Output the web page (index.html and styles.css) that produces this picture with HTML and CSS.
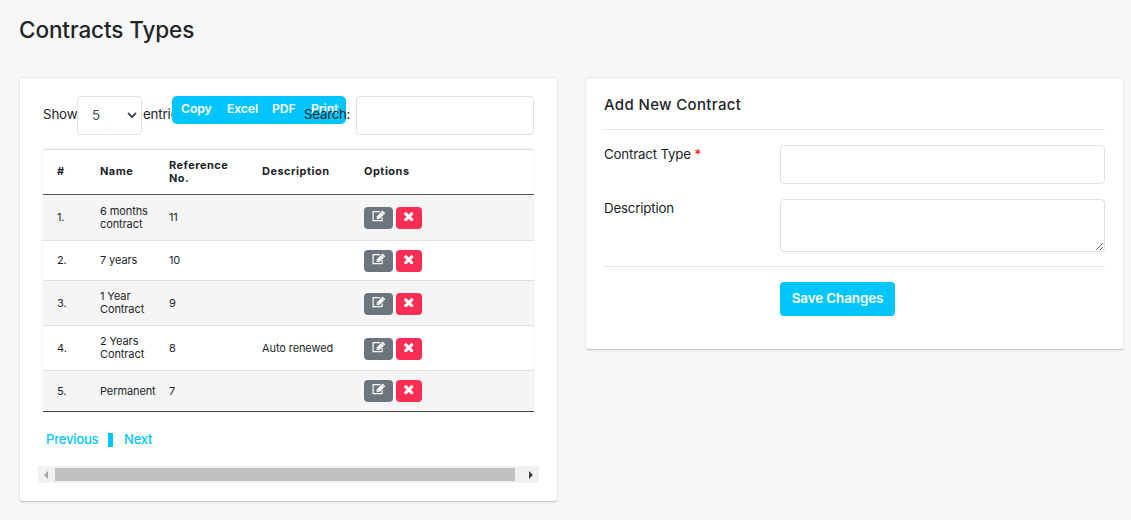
FILE: index.html
```
<!DOCTYPE html>
<html lang="en">
<head>
<meta charset="utf-8">
<title>Contracts Types</title>
<link rel="stylesheet" href="styles.css">
</head>
<body>
<svg class="sprite" width="0" height="0">
  <symbol id="edit" viewBox="0 0 14 12">
    <path d="M8.2 1.6H1.1v9h9V7.2" fill="none" stroke="currentColor" stroke-width="1.2"/>
    <path d="M4.7 9V6.4L10.6.5 13.3 3.2 7.4 9z" fill="currentColor"/>
    <path d="M5.6 6.9l1.3 1.3M9.7 2.1l2 2" stroke="#6c757d" stroke-width=".6"/>
  </symbol>
  <symbol id="times" viewBox="302 366 1188 1188">
    <path fill="currentColor" d="M1490 1322q0 40-28 68l-136 136q-28 28-68 28t-68-28l-294-294-294 294q-28 28-68 28t-68-28l-136-136q-28-28-28-68t28-68l294-294-294-294q-28-28-28-68t28-68l136-136q28-28 68-28t68 28l294 294 294-294q28-28 68-28t68 28l136 136q28 28 28 68t-28 68l-294 294 294 294q28 28 28 68z"/>
  </symbol>
</svg>
<h1 class="title">Contracts Types</h1>
<main class="columns">
  <section class="card list-card">
    <div class="toolbar">
      <label class="length"><span class="show">Show</span>
        <span class="select"><span class="value">5</span><svg width="10" height="7" viewBox="0 0 10 7"><path d="M1 1l4 4 4-4" fill="none" stroke="#495057" stroke-width="2"/></svg></span>
        <span class="entries">entries</span></label>
      <div class="exports"><span class="copy">Copy</span><span class="excel">Excel</span><span class="pdf">PDF</span><span class="print">Print</span></div>
      <label class="search"><span class="search-text">Search:</span><input class="field" type="text"></label>
    </div>
    <table class="table">
      <colgroup><col class="c1"><col class="c2"><col class="c3"><col class="c4"><col class="c5"></colgroup>
      <thead><tr><th>#</th><th>Name</th><th>Reference<br>No.</th><th>Description</th><th>Options</th></tr></thead>
      <tbody>
        <tr class="tall"><td>1.</td><td>6 months<br>contract</td><td>11</td><td></td><td><div class="actions"><span class="btn edit"><svg><use href="#edit"/></svg></span><span class="btn del"><svg><use href="#times"/></svg></span></div></td></tr>
        <tr><td>2.</td><td>7 years</td><td>10</td><td></td><td><div class="actions"><span class="btn edit"><svg><use href="#edit"/></svg></span><span class="btn del"><svg><use href="#times"/></svg></span></div></td></tr>
        <tr class="tall"><td>3.</td><td>1 Year<br>Contract</td><td>9</td><td></td><td><div class="actions"><span class="btn edit"><svg><use href="#edit"/></svg></span><span class="btn del"><svg><use href="#times"/></svg></span></div></td></tr>
        <tr class="tall"><td>4.</td><td>2 Years<br>Contract</td><td>8</td><td>Auto renewed</td><td><div class="actions"><span class="btn edit"><svg><use href="#edit"/></svg></span><span class="btn del"><svg><use href="#times"/></svg></span></div></td></tr>
        <tr><td>5.</td><td>Permanent</td><td>7</td><td></td><td><div class="actions"><span class="btn edit"><svg><use href="#edit"/></svg></span><span class="btn del"><svg><use href="#times"/></svg></span></div></td></tr>
      </tbody>
    </table>
    <nav class="pager"><span class="prev">Previous</span><i class="bar"></i><span class="next">Next</span></nav>
    <div class="scrollbar">
      <svg width="17" height="17"><path d="M10 5v8L6 9z" fill="#a3a3a3"/></svg>
      <div class="thumb"></div>
      <svg class="right" width="17" height="17"><path d="M7 5v8l4-4z" fill="#404040"/></svg>
    </div>
  </section>
  <section class="card form-card">
    <h2 class="form-title">Add New Contract</h2>
    <form class="form">
      <label class="label"><span class="label-type">Contract Type</span> <span class="req">*</span></label>
      <input class="field" type="text">
      <label class="label label-desc">Description</label>
      <textarea class="field area"></textarea>
    </form>
    <div class="footer"><button class="save" type="button"><span>Save Changes</span></button></div>
  </section>
</main>
</body>
</html>
```
FILE: styles.css
```
* { box-sizing: border-box; }
body { margin: 0; height: 520px; overflow: hidden; background: #f7f7f7; color: #212529; font: 13.3px/20px Inter, "Liberation Sans", sans-serif; }
.sprite { position: absolute; }
.title { margin: 0; padding: 15px 0 0 19px; height: 77px; font-size: 22.5px; line-height: 30px; font-weight: 500; letter-spacing: -.1px; }
.columns { display: grid; grid-template-columns: 539px 539px; gap: 27px; padding-left: 19px; align-items: start; }
.card { background: #fff; border: 1px solid #e9e9e9; border-bottom-color: #c9c9c9; border-radius: 4px; box-shadow: 0 1px 1px rgba(0,0,0,.08); }
.list-card { height: 425px; padding: 18px 18px 0; }
.form-card { height: 273px; padding: 0 18px; }

.toolbar { position: relative; display: flex; justify-content: space-between; height: 53px; margin: 0 5px; }
.length { display: flex; align-items: center; height: 39px; letter-spacing: -.15px; }
.show { width: 34px; padding-bottom: 3px; white-space: nowrap; }
.select { display: flex; align-items: center; justify-content: space-between; width: 65px; height: 39px; padding: 0 4px 0 14px; border: 1px solid #e2e2e4; border-radius: 4px; color: #495057; background: #fff; }
.value { padding-bottom: 2px; }
.entries { width: 46px; padding: 0 0 3px 1px; }
.exports { position: absolute; left: 129px; top: 0; display: flex; width: 174px; height: 28px; padding: 3px 0 0 9px; border-radius: 5px; background: #00c5ff; color: #fff; font-size: 12.2px; font-weight: 600; letter-spacing: -.1px; }
.copy { width: 46px; }
.excel { width: 45px; }
.pdf { width: 39px; }
.search { position: relative; display: flex; align-items: center; height: 39px; }
.search-text { width: 52px; padding-bottom: 3px; letter-spacing: -.25px; white-space: nowrap; }
.search .field { width: 178px; }
.field { display: block; width: 100%; height: 39px; margin: 0; padding: 6px 12px; border: 1px solid #e1e1e3; border-radius: 4px; background: #fff; font: inherit; }

.table { width: 491px; margin: 0 5px; table-layout: fixed; border-collapse: separate; border-spacing: 0; font-size: 11px; line-height: 13px; box-shadow: 0 0 2px rgba(0,0,0,.1); }
.c1 { width: 43px; }
.c2 { width: 69px; }
.c3 { width: 93px; }
.c4 { width: 102px; }
.c5 { width: 184px; }
.table th, .table td { padding: 0 0 0 14px; text-align: left; vertical-align: middle; white-space: nowrap; }
.table th { height: 46px; padding-bottom: 1px; border-top: 1px solid #dee2e6; border-bottom: 1px solid #555; font-weight: 700; letter-spacing: .48px; }
.table td { height: 40px; border-bottom: 1px solid #dee2e6; letter-spacing: -.1px; }
.table .tall td { height: 45px; }
.table tbody tr:nth-child(odd) { background: #f5f5f5; }
.table tbody tr:first-child td { height: 46px; }
.table tbody tr:last-child td { height: 41px; border-bottom-color: #444; }
.actions { display: flex; gap: 3px; }
.tall + .tall .actions, tr:nth-child(3) .actions { padding-top: 1px; }
.btn { display: flex; justify-content: center; height: 22px; border-radius: 4px; color: #fff; }
.edit { width: 29px; background: #6c757d; }
.edit svg { width: 14px; height: 12px; margin-top: 3px; }
.del { width: 26px; background: #fa2d54; }
.del svg { width: 9.5px; height: 9.5px; margin-top: 5px; }

.pager { display: flex; align-items: center; height: 54px; padding: 1px 0 0 8px; color: #00c5ff; font-size: 13px; font-weight: 500; letter-spacing: -.2px; }
.prev { width: 62px; padding-bottom: 2px; }
.bar { width: 5px; height: 14px; margin-right: 11px; background: #00c5ff; }
.next { padding-bottom: 2px; }
.scrollbar { display: flex; align-items: center; height: 17px; background: #f1f1f1; }
.thumb { width: 460px; height: 13px; background: #c1c1c1; }
.right { margin-left: auto; }

.form-title { margin: 0; height: 52px; padding-top: 17px; border-bottom: 1px solid #e5e5e5; font-size: 15px; line-height: 20px; font-weight: 500; letter-spacing: .35px; }
.form { display: grid; grid-template-columns: 176px 325px; row-gap: 15px; padding: 15px 0 14px; border-bottom: 1px solid #e5e5e5; }
.label { margin-top: -1px; letter-spacing: -.18px; white-space: nowrap; }
.req { color: #f00; }
.area { height: 53px; resize: vertical; }
.footer { padding: 15px 0 0 176px; }
.save { display: block; width: 115px; height: 34px; padding: 0 0 1px; border: 0; border-radius: 4px; background: #00c5ff; color: #fff; font: 600 13.4px/31px Inter, sans-serif; letter-spacing: -.08px; white-space: nowrap; }
```
